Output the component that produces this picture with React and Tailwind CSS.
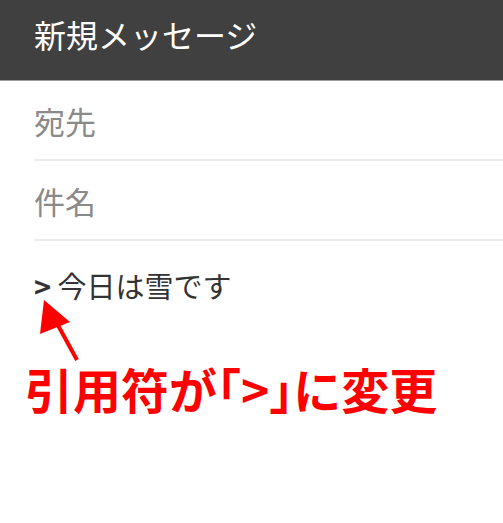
export default function App() {
  const font = { fontFamily: '"Noto Sans CJK JP", "Noto Sans", sans-serif' };

  return (
    <div className="relative w-[503px] h-[523px] bg-white overflow-hidden" style={font}>
      {/* header */}
      <div className="h-[81px] bg-[#404040] border-b border-[#9c9c9c]">
        <div className="pl-[34px] pt-[18px] text-[32px] leading-none text-white">
          新規メッセージ
        </div>
      </div>

      {/* fields */}
      <div className="ml-[34px]">
        <div className="h-[80px] flex items-center border-b-2 border-[#ececec] text-[31px] leading-none text-[#8a8a8a]">
          宛先
        </div>
        <div className="h-[80px] flex items-center border-b-2 border-[#ececec] text-[31px] leading-none text-[#8a8a8a]">
          件名
        </div>
        <div className="pt-[30px] text-[29px] leading-none text-[#333333]">
          <span className="font-bold">&gt;</span> 今日は雪です
        </div>
      </div>

      {/* annotation arrow */}
      <svg className="absolute left-0 top-0" width="503" height="523">
        <line x1="77" y1="360" x2="54" y2="318" stroke="#ff0000" strokeWidth="4" />
        <polygon points="44,300 40,334 70,322" fill="#ff0000" />
      </svg>

      {/* annotation text */}
      <div className="absolute left-[25px] top-[364px] text-[48px] leading-none font-bold text-[#ff0000] whitespace-nowrap">
        引用符が｢&gt;｣に変更
      </div>
    </div>
  );
}
